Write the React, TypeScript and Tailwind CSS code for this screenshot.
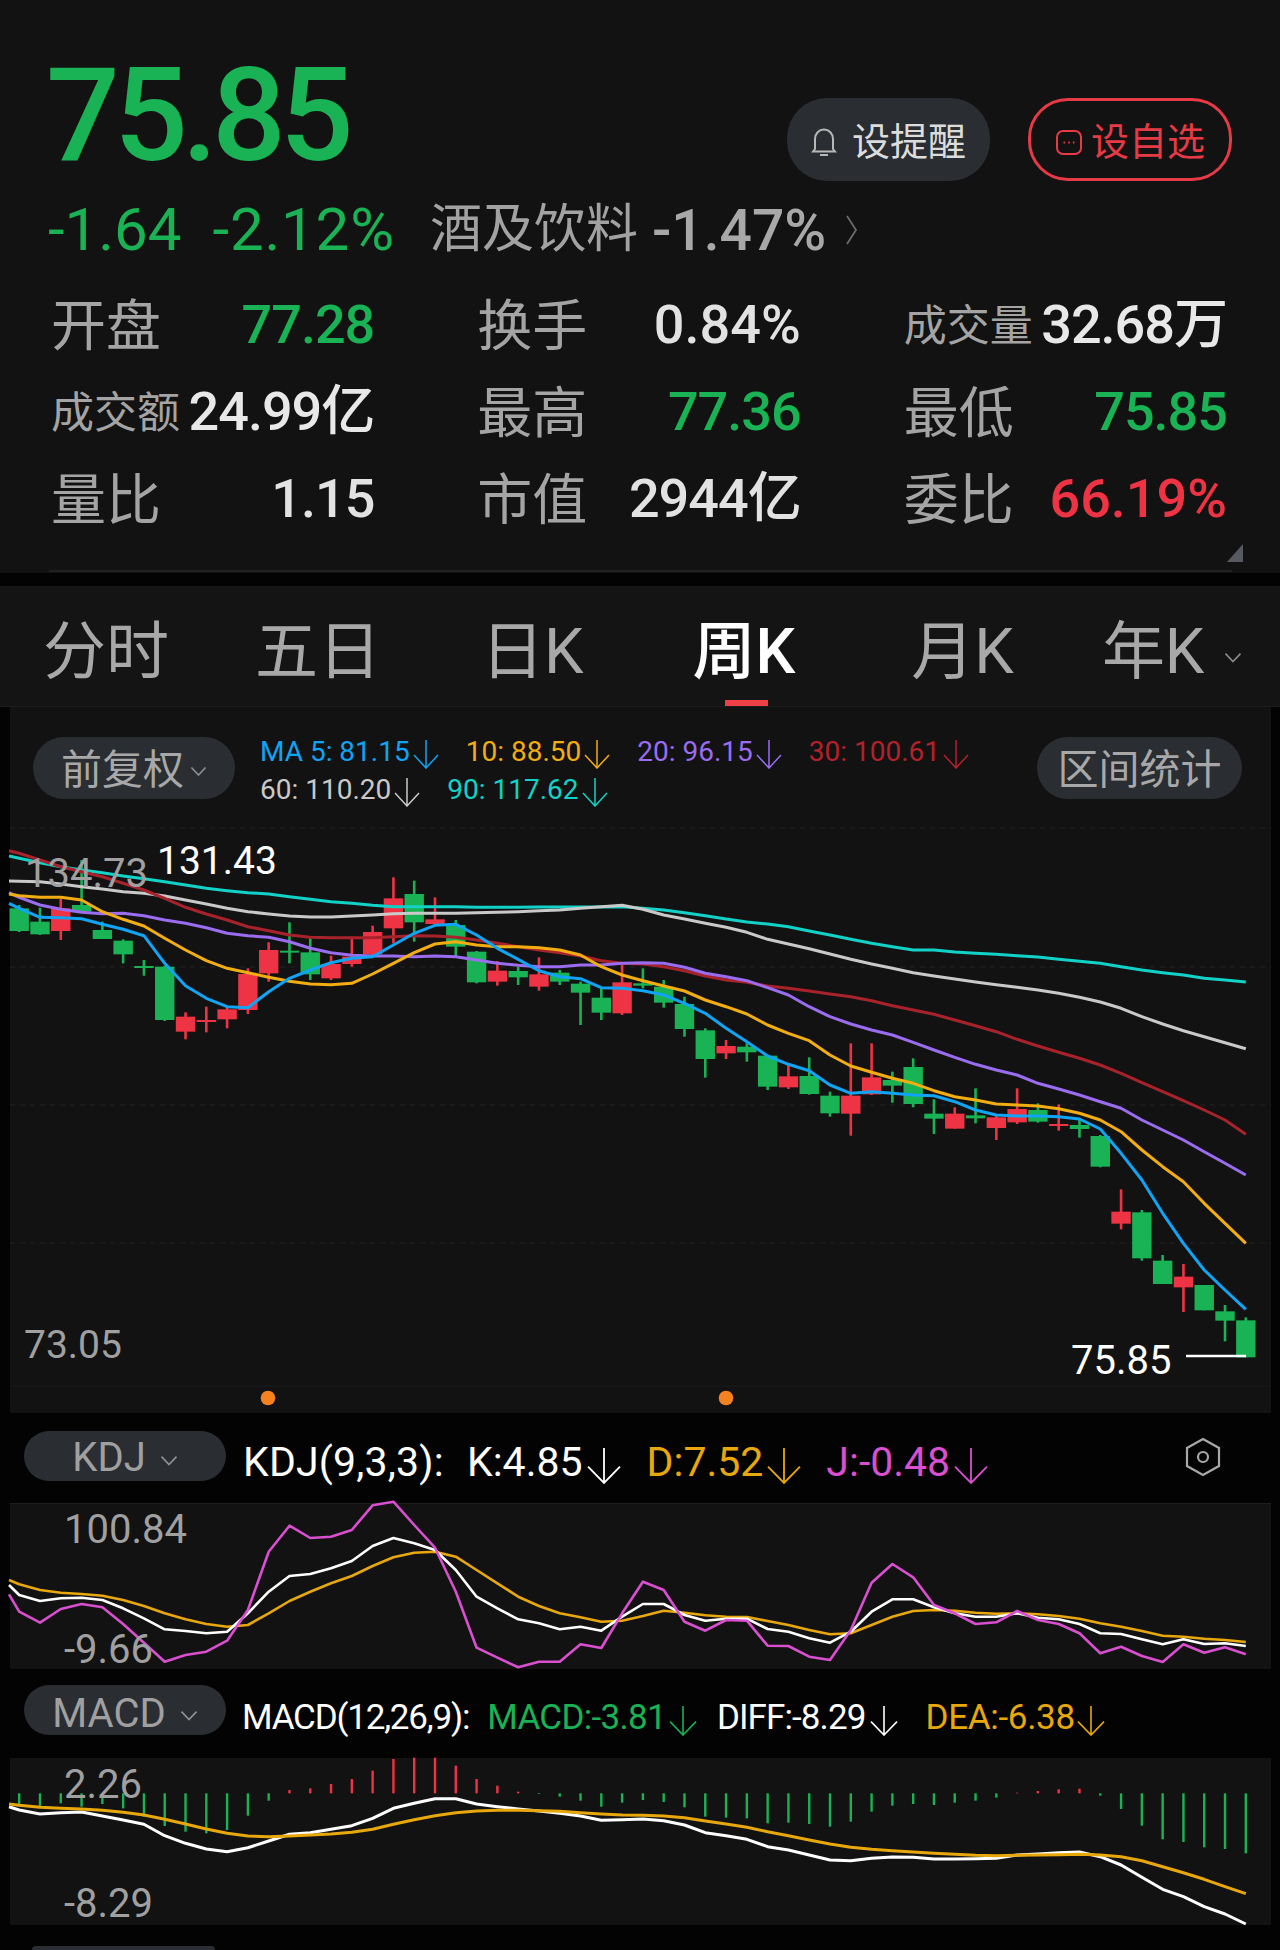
import React from "react";

const GREEN = "#19b254";
const RED = "#ee3344";
const xAt = (i: number) => 19.2 + 20.79 * i;

const candles: number[][] = [
  [0,255,265,333,336],[0,263,305,343,345],[1,237,265,333,360],[0,120,255,275,275],[0,305,330,357,357],
  [0,358,362,403,430],[0,420,438,444,467],[0,437,440,600,603],[1,577,590,635,658],[1,560,600,606,637],
  [1,560,568,598,625],[1,445,462,570,582],[1,367,390,460,485],[0,307,392,398,430],[0,355,397,463,480],
  [1,407,432,475,480],[1,350,410,432,440],[1,317,336,403,410],[1,172,235,325,370],[0,182,222,307,365],
  [1,232,298,312,315],[0,300,315,380,410],[0,393,395,487,490],[1,423,452,485,497],[0,440,453,472,495],
  [1,412,463,500,512],[0,450,458,485,495],[0,485,491,518,615],[0,505,533,578,600],[1,435,487,580,585],
  [0,445,490,497,505],[0,480,500,548,563],[0,530,552,627,650],[0,625,631,717,773],[1,660,678,700,717],
  [0,670,680,697,725],[0,705,707,800,810],[1,735,769,802,807],[0,712,768,822,824],[0,815,827,880,890],
  [1,670,827,881,947],[1,670,772,823,825],[0,755,780,797,848],[0,715,741,852,862],[0,838,881,896,942],
  [1,862,881,926,926],[0,805,886,895,910],[1,885,892,924,960],[1,805,867,907,912],[0,850,870,905,908],
  [1,853,912,918,932],[0,900,915,927,953],[0,945,948,1040,1042],[1,1108,1175,1211,1228],[0,1170,1177,1315,1322],
  [0,1305,1322,1392,1392],[1,1332,1370,1402,1476],[0,1395,1395,1471,1471],[0,1455,1474,1502,1564],[0,1492,1501,1612,1612],
];

// first value = line start at the pane edge, then one value per candle
const ma5 = [250,265,292,293,296,313,328,347,430,497,535,560,563,515,475,450,428,415,410,375,340,316,313,345,385,418,452,470,476,503,505,512,525,550,580,625,665,708,733,752,795,820,815,820,825,827,845,870,885,888,888,890,897,927,1000,1080,1180,1270,1350,1410,1468];
const ma10 = [222,227,232,232,240,275,298,318,355,390,422,445,458,472,484,492,494,490,462,430,398,372,365,375,380,380,383,390,405,440,465,482,498,513,540,560,582,615,640,662,705,738,757,775,790,812,830,840,852,855,858,866,880,900,935,990,1040,1085,1150,1210,1270];
const ma20 = [218,232,255,268,277,281,280,287,300,310,323,340,347,352,365,385,398,406,408,408,410,408,410,420,430,436,440,440,435,435,430,428,430,442,460,470,482,503,525,560,590,612,630,645,667,690,712,733,750,765,790,807,825,845,865,900,930,960,995,1030,1065];
const ma30 = [92,100,120,140,155,170,190,210,235,262,282,300,320,332,345,352,353,353,353,350,347,348,352,360,370,380,390,398,408,422,430,432,440,452,468,480,487,498,505,513,522,530,542,557,570,583,600,617,635,658,678,697,715,735,760,788,815,842,870,900,943];
const ma60 = [183,184,185,192,200,207,215,220,228,240,252,265,275,282,288,291,291,288,285,281,280,280,280,278,277,275,272,270,265,260,256,268,285,297,310,322,337,358,372,386,402,418,432,445,458,468,477,486,494,502,510,520,532,546,565,590,612,632,650,668,686];
const ma90 = [108,115,128,140,150,158,168,176,185,195,205,212,218,222,230,238,245,250,256,260,260,260,260,262,262,262,261,261,261,261,260,265,270,278,287,297,306,312,320,333,345,358,370,380,390,390,396,400,403,407,411,418,424,430,440,450,458,465,475,480,486];

const kK = [555,585,603,595,593,600,625,655,688,693,700,695,640,575,528,522,505,483,438,414,430,450,510,590,625,658,670,688,680,692,650,612,612,645,662,656,656,687,695,715,728,695,635,598,598,622,640,650,650,640,653,658,672,700,702,718,733,718,732,730,738];
const kD = [540,553,570,578,582,587,600,618,640,658,672,680,675,640,603,575,550,528,498,472,458,455,470,510,550,590,618,640,652,665,662,648,632,638,646,650,651,663,675,690,703,700,675,650,633,630,632,638,641,640,643,648,656,670,680,693,707,710,716,720,726];
const kJ = [583,635,668,627,612,622,672,728,785,765,755,722,630,455,377,414,410,390,316,305,375,443,575,743,773,802,785,785,733,744,640,545,570,665,692,660,662,737,738,770,780,690,548,492,532,615,640,672,667,633,660,672,700,760,740,768,786,733,758,742,763];

const mDiff = [410,420,432,428,426,438,450,463,497,520,537,545,533,513,493,488,478,467,445,415,400,386,386,402,410,417,423,430,438,451,449,447,452,465,488,497,508,530,540,555,570,572,565,561,562,567,567,566,565,555,552,548,546,560,585,622,658,680,710,732,762];
const mDea = [402,406,412,415,417,421,427,435,448,462,477,490,498,500,498,495,492,487,478,463,449,437,428,423,421,421,422,424,428,432,435,436,438,443,453,462,472,485,497,510,522,532,538,542,546,550,553,556,557,556,555,554,553,555,560,572,590,608,628,650,671];
// MACD bar end (zoom units), bars run from the zero line at 370
const mBars = [405,410,400,410,402,415,440,468,485,490,480,437,392,360,355,342,327,302,267,263,263,287,327,347,365,372,380,392,410,398,390,396,412,440,443,445,460,458,462,470,455,425,407,402,405,398,392,383,368,363,358,356,377,417,467,508,516,532,537,550];

const pts = (a: number[], base: number) =>
  a.map((z, k) => `${k === 0 ? 9 : xAt(k - 1).toFixed(1)},${(base + z / 3).toFixed(1)}`).join(" ");

function Line({ d, base, color, w = 3 }: { d: number[]; base: number; color: string; w?: number }) {
  return <polyline points={pts(d, base)} fill="none" stroke={color} strokeWidth={w} strokeLinejoin="round" strokeLinecap="butt" />;
}

function Arrow({ color, w, h, sw = 1.6 }: { color: string; w: number; h: number; sw?: number }) {
  return (
    <svg width={w} height={h} viewBox={`0 0 ${w} ${h}`} className="shrink-0" fill="none">
      <path d={`M${w / 2} 0V${h - 1}M1 ${h * 0.52}L${w / 2} ${h - 1}L${w - 1} ${h * 0.52}`} stroke={color} strokeWidth={sw} />
    </svg>
  );
}

function Chevron({ size = 18, color = "#8e9094" }: { size?: number; color?: string }) {
  return (
    <svg width={size} height={size * 0.62} viewBox="0 0 18 11" fill="none" className="shrink-0">
      <path d="M1.5 1.5L9 9.5L16.5 1.5" stroke={color} strokeWidth="1.7" />
    </svg>
  );
}

function Stat({ label, value, color, small, wide }: { label: string; value: string; color: string; small?: boolean; wide?: boolean }) {
  return (
    <div className="flex items-center justify-between h-[87px]">
      <span className={small ? "pt-[3px] text-[43px] leading-none text-[#a4a4a4] font-normal" : "pt-[3px] text-[55px] leading-none text-[#a4a4a4] font-normal"}>{label}</span>
      <span className={wide ? "text-[54px] font-medium whitespace-nowrap" : "text-[54px] font-medium tracking-[-1px] whitespace-nowrap"} style={{ color }}>{value}</span>
    </div>
  );
}

function Tab({ label, active, x, chevron }: { label: string; active?: boolean; x: string; chevron?: boolean }) {
  return (
    <span className={`${x} flex items-center text-[63px] leading-none ${active ? "text-white font-medium" : "text-[#a8a8a8] font-normal"}`}>
      {label}
      {chevron && <span className="ml-[20px] mt-[14px]"><Chevron size={18} color="#8a8a8a" /></span>}
    </span>
  );
}

function MaItem({ text, color }: { text: string; color: string }) {
  return (
    <span className="flex items-center" style={{ color }}>
      <span>{text}</span>
      <span className="ml-[3px] mt-[5px]"><Arrow color={color} w={26} h={29} sw={1.5} /></span>
    </span>
  );
}

function Pill({ children, cls }: { children: React.ReactNode; cls: string }) {
  return <div className={`flex items-center justify-center rounded-full bg-[#2a2d32] ${cls}`}>{children}</div>;
}

export default function App() {
  return (
    <div className="w-[1280px] h-[1950px] bg-[#030303] overflow-hidden" style={{ fontFamily: 'Roboto, "Noto Sans CJK SC", sans-serif' }}>
      {/* quote header */}
      <section className="relative h-[573px] bg-[#121212] px-[48px]">
        <div className="flex justify-between items-start h-[196px]">
          <div className="pt-[41px] -ml-[2px] text-[130px] leading-[150px] tracking-[-6px] font-medium" style={{ color: GREEN }}>75.85</div>
          <div className="flex gap-[38px] pt-[98px]">
            <div className="flex items-center justify-center gap-[15px] w-[203px] h-[83px] rounded-[40px] bg-[#2a2d32] text-[#dcdcdc] text-[38px] font-normal">
              <svg width="26" height="30" viewBox="0 0 26 30" fill="none" stroke="#b8b8b8" strokeWidth="2" className="mt-[4px]">
                <path d="M4 22V12C4 6.5 8 2.5 13 2.5C18 2.5 22 6.5 22 12V22L24 24.5H2L4 22Z" />
                <path d="M9 28H17" />
              </svg>
              <span className="pt-[5px]">设提醒</span>
            </div>
            <div className="flex items-center justify-center gap-[8px] w-[204px] h-[83px] rounded-[40px] border-[3px] border-[#e63a46] text-[#e63a46] text-[38px] font-normal">
              <svg width="28" height="28" viewBox="0 0 28 28" fill="none" stroke="#e63a46" strokeWidth="2" className="mt-[4px]">
                <rect x="2" y="3" width="24" height="23" rx="6" />
                <path d="M8.5 14.5h1.6M13.2 14.5h1.6M17.9 14.5h1.6" strokeWidth="2.2" />
              </svg>
              <span className="pt-[5px]">设自选</span>
            </div>
          </div>
        </div>
        <div className="flex items-center h-[68px] font-normal text-[60px] leading-none" style={{ color: GREEN }}>
          <span>-1.64</span>
          <span className="ml-[31px] tracking-[0.8px]">-2.12%</span>
          <span className="ml-[35px] text-[52px] text-[#a2a2a2]">酒及饮料</span>
          <span className="ml-[14px] text-[57px] text-[#a8a8a8] font-medium">-1.47%</span>
          <svg width="12" height="30" viewBox="0 0 12 30" fill="none" className="ml-[20px]">
            <path d="M1 1L10 15L1 29" stroke="#6a6a6a" strokeWidth="1.8" />
          </svg>
        </div>
        <div className="grid grid-cols-3 gap-x-[103px] pl-[3px] pr-[5px] mt-[17px]">
          <Stat label="开盘" value="77.28" color={GREEN} />
          <Stat label="换手" value="0.84%" color="#e2e2e2" wide />
          <Stat label="成交量" value="32.68万" color="#e8e8e8" small />
          <Stat label="成交额" value="24.99亿" color="#e8e8e8" small />
          <Stat label="最高" value="77.36" color={GREEN} />
          <Stat label="最低" value="75.85" color={GREEN} />
          <Stat label="量比" value="1.15" color="#e2e2e2" />
          <Stat label="市值" value="2944亿" color="#e2e2e2" />
          <Stat label="委比" value="66.19%" color="#ee3344" wide />
        </div>
        <svg width="16" height="18" viewBox="0 0 16 18" className="absolute left-[1227px] top-[544px]">
          <path d="M16 0V18H0Z" fill="#565a60" />
        </svg>
        <div className="absolute left-[49px] right-[48px] bottom-[1px] h-[2px] bg-[#212121]" />
      </section>

      {/* period tabs */}
      <nav className="relative mt-[13px] h-[121px] bg-[#141414] border-b border-[#1d1d1d] flex items-center pt-[10px]">
        <Tab label="分时" x="ml-[43px]" />
        <Tab label="五日" x="ml-[86px]" />
        <Tab label="日K" x="ml-[100px]" />
        <Tab label="周K" active x="ml-[109px]" />
        <Tab label="月K" x="ml-[116px]" />
        <Tab label="年K" chevron x="ml-[88px]" />
        <span className="absolute left-[725px] bottom-0 w-[43px] h-[6px] bg-[#ef4048]" />
      </nav>

      {/* main chart */}
      <section className="relative ml-[10px] mr-[9px] h-[706px] bg-[#121212]">
        <div className="flex items-start h-[113px] pt-[30px] pl-[23px]">
          <Pill cls="w-[202px] h-[62px] gap-[6px] text-[41px] text-[#a8a8a8] font-normal">
            <span className="pt-[5px]">前复权</span><span className="mt-[6px]"><Chevron size={17} /></span>
          </Pill>
          <div className="ml-[25px] -mt-[4px] flex flex-col text-[28px] leading-[37px] font-normal">
            <div className="flex gap-[27px] h-[37px]">
              <MaItem text="MA 5: 81.15" color="#10a4f4" />
              <MaItem text="10: 88.50" color="#f2ad10" />
              <MaItem text="20: 96.15" color="#9a6cf0" />
              <MaItem text="30: 100.61" color="#b3212b" />
            </div>
            <div className="flex gap-[27px] h-[37px] mt-[1px]">
              <MaItem text="60: 110.20" color="#c9c9c9" />
              <MaItem text="90: 117.62" color="#12d2c8" />
            </div>
          </div>
          <Pill cls="absolute left-[1027px] top-[30px] w-[205px] h-[62px] text-[41px] text-[#a8a8a8] font-normal">
            <span className="pt-[5px]">区间统计</span>
          </Pill>
        </div>
        <svg width="1261" height="593" viewBox="10 820 1261 593" className="block overflow-visible">
          {[828, 967, 1105, 1243].map((y) => (
            <line key={y} x1="10" x2="1271" y1={y} y2={y} stroke="#232323" strokeWidth="1" strokeDasharray="5 5" />
          ))}
          <line x1="10" x2="1271" y1="1386" y2="1386" stroke="#1b1b1b" strokeWidth="1" />
          {candles.map((c, i) => {
            const col = c[0] ? RED : GREEN;
            const x = xAt(i);
            const y = (z: number) => 820 + z / 3;
            return (
              <g key={i} fill={col}>
                <rect x={x - 1.3} width="2.6" y={y(c[1])} height={Math.max(0, y(c[4]) - y(c[1]))} />
                <rect x={x - 9.7} width="19.4" y={y(c[2])} height={y(c[3]) - y(c[2])} />
              </g>
            );
          })}
          <Line d={ma90} base={820} color="#12d2c8" />
          <Line d={ma60} base={820} color="#c9c9c9" />
          <Line d={ma30} base={820} color="#a8222b" />
          <Line d={ma20} base={820} color="#9a6cf0" />
          <Line d={ma10} base={820} color="#f2ad10" />
          <Line d={ma5} base={820} color="#10a4f4" />
          <line x1="1186" x2="1246" y1="1356" y2="1356" stroke="#ffffff" strokeWidth="2.4" />
          <circle cx="268" cy="1398" r="7.3" fill="#f5821f" />
          <circle cx="726" cy="1398" r="7.3" fill="#f5821f" />
        </svg>
        <span className="absolute left-[15px] top-[143px] text-[40px] leading-[47px] text-[#a0a0a0]">134.73</span>
        <span className="absolute left-[147px] top-[131px] text-[39px] leading-[47px] text-white">131.43</span>
        <span className="absolute left-[14px] top-[616px] text-[39px] leading-[44px] text-[#a0a0a0]">73.05</span>
        <span className="absolute left-[1061px] top-[630px] text-[40px] leading-[47px] text-white">75.85</span>
      </section>

      {/* KDJ */}
      <div className="relative h-[90px] flex items-center pl-[24px] text-[41px] pt-[10px]">
        <Pill cls="w-[202px] h-[50px] -mt-[14px] gap-[14px] text-[40px] text-[#a0a0a0]">
          <span className="pt-[4px]">KDJ</span><span className="mt-[10px]"><Chevron size={18} /></span>
        </Pill>
        <span className="ml-[17px] text-white tracking-[0.2px]">KDJ(9,3,3):</span>
        <span className="ml-[23px] text-white">K:4.85</span>
        <span className="ml-[4px] mt-[6px]"><Arrow color="#ffffff" w={34} h={36} sw={1.8} /></span>
        <span className="ml-[26px] text-[#e8a80c]">D:7.52</span>
        <span className="ml-[4px] mt-[6px]"><Arrow color="#e8a80c" w={34} h={36} sw={1.8} /></span>
        <span className="ml-[25px] text-[#d94fd0]">J:-0.48</span>
        <span className="ml-[4px] mt-[6px]"><Arrow color="#d94fd0" w={34} h={36} sw={1.8} /></span>
        <svg width="36" height="40" viewBox="0 0 36 40" fill="none" stroke="#a8a8a8" strokeWidth="2.2" className="absolute left-[1185px] top-[24px]">
          <path d="M18 2L34 11V29L18 38L2 29V11Z" />
          <circle cx="18" cy="20" r="5" />
        </svg>
      </div>
      <section className="relative ml-[10px] mr-[9px] h-[166px] bg-[#121212] border-t border-[#1e1e1e]">
        <svg width="1261" height="165" viewBox="10 1504 1261 165" className="block overflow-visible">
          <Line d={kD} base={1400} color="#e8a80c" w={2.6} />
          <Line d={kK} base={1400} color="#ffffff" w={2.6} />
          <Line d={kJ} base={1400} color="#d94fd0" w={2.6} />
        </svg>
        <span className="absolute left-[54px] top-[2px] text-[40px] leading-[47px] text-[#a0a0a0]">100.84</span>
        <span className="absolute left-[54px] top-[122px] text-[40px] leading-[47px] text-[#a0a0a0]">-9.66</span>
      </section>

      {/* MACD */}
      <div className="h-[89px] flex items-center pl-[24px] text-[35px] pt-[9px]">
        <Pill cls="w-[202px] h-[50px] -mt-[16px] gap-[14px] text-[40px] text-[#a0a0a0]">
          <span className="pt-[7px]">MACD</span><span className="mt-[12px]"><Chevron size={18} /></span>
        </Pill>
        <span className="ml-[16px] text-white tracking-[-1.2px]">MACD(12,26,9):</span>
        <span className="ml-[18px] tracking-[-0.7px]" style={{ color: GREEN }}>MACD:-3.81</span>
        <span className="ml-[3px] mt-[6px]"><Arrow color={GREEN} w={28} h={30} sw={1.6} /></span>
        <span className="ml-[20px] text-white tracking-[-0.9px]">DIFF:-8.29</span>
        <span className="ml-[5px] mt-[6px]"><Arrow color="#ffffff" w={28} h={30} sw={1.6} /></span>
        <span className="ml-[27px] text-[#e8a80c] tracking-[-0.3px]">DEA:-6.38</span>
        <span className="ml-[2px] mt-[6px]"><Arrow color="#e8a80c" w={28} h={30} sw={1.6} /></span>
      </div>
      <section className="relative ml-[10px] mr-[9px] h-[167px] bg-[#121212]">
        <svg width="1261" height="167" viewBox="10 1758 1261 167" className="block overflow-visible">
          {mBars.map((z, i) => {
            const y0 = 1670 + 370 / 3;
            const y1 = 1670 + z / 3;
            const up = z < 370;
            return (
              <rect key={i} x={xAt(i) - 1.2} width="2.4" y={Math.min(y0, y1)} height={Math.abs(y1 - y0)} fill={up ? RED : GREEN} />
            );
          })}
          <Line d={mDiff} base={1670} color="#ffffff" />
          <Line d={mDea} base={1670} color="#e8a80c" />
        </svg>
        <span className="absolute left-[54px] top-[3px] text-[40px] leading-[47px] text-[#a0a0a0]">2.26</span>
        <span className="absolute left-[54px] top-[122px] text-[40px] leading-[47px] text-[#a0a0a0]">-8.29</span>
      </section>
      <div className="h-[25px] pl-[32px] pt-[21px]">
        <div className="w-[183px] h-[4px] rounded-t-[4px] bg-[#2a2d32]" />
      </div>
    </div>
  );
}
